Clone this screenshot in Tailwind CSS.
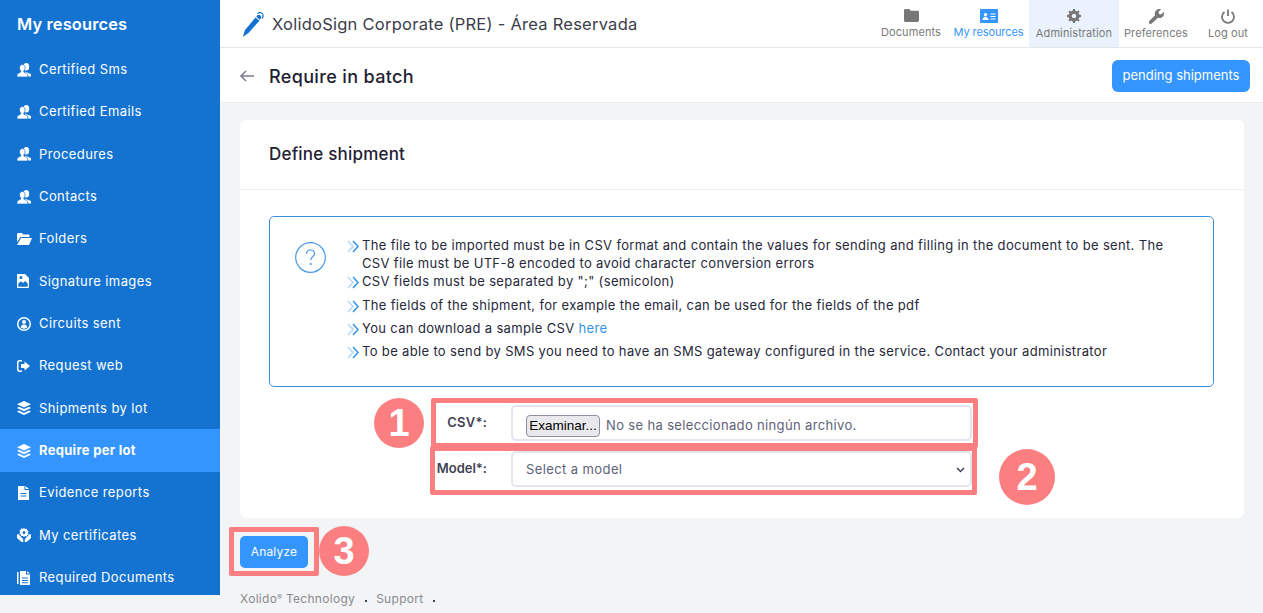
<!DOCTYPE html>
<html lang="en">

<head>
    <meta charset="UTF-8">
    <meta name="viewport" content="width=device-width, initial-scale=1.0">
    <title>Require in batch</title>
    <script src="https://cdn.jsdelivr.net/npm/@tailwindcss/browser@4"></script>
</head>

<body class="bg-[#f3f4f6] font-[Inter,sans-serif] text-[#2a2c3a]">
    <div class="relative flex h-[613px] w-[1263px] overflow-hidden">
        <!-- sidebar -->
        <aside class="h-[595px] w-[220px] shrink-0 overflow-hidden bg-[#1473d1] text-white">
            <div class="flex h-[48.4px] items-center pl-[17px] text-[16.5px] font-semibold tracking-[0.1px]">My resources</div>
            <nav class="text-[13px] tracking-[0.4px]">
                <a class="flex h-[42.35px] items-center pl-[17px]"><svg class="mr-[8px] h-[14px] w-[14px] fill-white" viewBox="0 0 14 14"><ellipse cx="9.300" cy="3.800" rx="2.900" ry="3.800"/><path d="M8 8.500l2 1 4 1.500v2.500H8z"/><path stroke="#1473d1" stroke-width=".7" d="M5.300 1.500c1.700 0 2.800 1.500 2.800 3.400 0 1.400-.6 2.500-1.300 3.100v1l3 1.500c.7.400 1 1 1 1.500v2H0v-2c0-.6.300-1.100 1-1.500l2.800-1.500V8C3.100 7.400 2.500 6.300 2.500 4.900c0-1.900 1.100-3.400 2.800-3.400z"/></svg>Certified Sms</a>
                <a class="flex h-[42.35px] items-center pl-[17px]"><svg class="mr-[8px] h-[14px] w-[14px] fill-white" viewBox="0 0 14 14"><ellipse cx="9.300" cy="3.800" rx="2.900" ry="3.800"/><path d="M8 8.500l2 1 4 1.500v2.500H8z"/><path stroke="#1473d1" stroke-width=".7" d="M5.300 1.500c1.700 0 2.800 1.500 2.800 3.400 0 1.400-.6 2.500-1.300 3.100v1l3 1.500c.7.400 1 1 1 1.500v2H0v-2c0-.6.300-1.100 1-1.500l2.800-1.500V8C3.100 7.400 2.500 6.300 2.500 4.900c0-1.900 1.100-3.400 2.800-3.400z"/></svg>Certified Emails</a>
                <a class="flex h-[42.35px] items-center pl-[17px]"><svg class="mr-[8px] h-[14px] w-[14px] fill-white" viewBox="0 0 14 14"><ellipse cx="9.300" cy="3.800" rx="2.900" ry="3.800"/><path d="M8 8.500l2 1 4 1.500v2.500H8z"/><path stroke="#1473d1" stroke-width=".7" d="M5.300 1.500c1.700 0 2.800 1.500 2.800 3.400 0 1.400-.6 2.500-1.300 3.100v1l3 1.500c.7.400 1 1 1 1.500v2H0v-2c0-.6.300-1.100 1-1.500l2.800-1.500V8C3.100 7.400 2.500 6.300 2.500 4.900c0-1.900 1.100-3.400 2.800-3.400z"/></svg>Procedures</a>
                <a class="flex h-[42.35px] items-center pl-[17px]"><svg class="mr-[8px] h-[14px] w-[14px] fill-white" viewBox="0 0 14 14"><ellipse cx="9.300" cy="3.800" rx="2.900" ry="3.800"/><path d="M8 8.500l2 1 4 1.500v2.500H8z"/><path stroke="#1473d1" stroke-width=".7" d="M5.300 1.500c1.700 0 2.800 1.500 2.800 3.400 0 1.400-.6 2.500-1.300 3.100v1l3 1.500c.7.400 1 1 1 1.500v2H0v-2c0-.6.300-1.100 1-1.500l2.800-1.500V8C3.100 7.400 2.500 6.300 2.500 4.900c0-1.900 1.100-3.400 2.800-3.400z"/></svg>Contacts</a>
                <a class="flex h-[42.35px] items-center pl-[17px]"><svg class="mr-[7px] h-[12px] w-[15px] fill-white" viewBox="0 0 15 12"><path d="M0 1.500C0 .7.500 0 1.300 0h3.500l1.500 1.500h5c.7 0 1.200.5 1.200 1.200V4H3.500L0 9z"/><path d="M4 5h11l-3 7H0z"/></svg>Folders</a>
                <a class="flex h-[42.35px] items-center pl-[17px]"><svg class="mr-[10px] h-[14px] w-[12px] fill-white" viewBox="0 0 12 14"><path fill-rule="evenodd" d="M1 0h7l4 4v9c0 .6-.4 1-1 1H1c-.6 0-1-.4-1-1V1c0-.6.400-1 1-1zm.3 9.500v3.200h9.400V9.500L8.200 7 6 9 4 7.200zM4 2a1.500 1.500 0 1 0 0 3 1.500 1.500 0 0 0 0-3z"/></svg>Signature images</a>
                <a class="flex h-[42.35px] items-center pl-[17px]"><svg class="mr-[8px] h-[14px] w-[14px] fill-white" viewBox="0 0 14 14"><path fill-rule="evenodd" d="M7 0a7 7 0 1 1 0 14A7 7 0 0 1 7 0zm0 1.500a5.500 5.500 0 1 0 0 11 5.500 5.500 0 0 0 0-11zM7 3a2 2 0 1 1 0 4 2 2 0 0 1 0-4zM3.800 10.500c0-2 1.300-3 3.200-3s3.200 1 3.200 3c-.8.700-1.900 1.200-3.200 1.200s-2.400-.5-3.200-1.200z"/></svg>Circuits sent</a>
                <a class="flex h-[42.35px] items-center pl-[17px]"><svg class="mr-[9px] h-[12px] w-[13px] fill-white" viewBox="0 0 13 12"><path d="M0 2.500C0 1.200 1 0 2.400 0H5v1.500H2.500c-.5 0-1 .5-1 1v7c0 .5.500 1 1 1H5V12H2.400C1 12 0 10.800 0 9.500z"/><path d="M7.500 1.500 13 6l-5.500 4.500V8H4V4h3.500z"/></svg>Request web</a>
                <a class="flex h-[42.35px] items-center pl-[17px]"><svg class="mr-[8px] h-[14px] w-[14px] fill-white" viewBox="0 0 14 14"><path d="M7 0l7 3.200-7 3.200L0 3.200z"/><path d="M2 5.800l5 2.300 5-2.300 2 1.200-7 3.200L0 7z"/><path d="M2 9.600l5 2.300 5-2.300 2 1.200L7 14 0 10.800z"/></svg>Shipments by lot</a>
                <a class="flex h-[42.35px] items-center bg-[#3495ff] pl-[17px] font-bold tracking-[0.3px]"><svg class="mr-[8px] h-[14px] w-[14px] fill-white" viewBox="0 0 14 14"><path d="M7 0l7 3.200-7 3.200L0 3.200z"/><path d="M2 5.800l5 2.300 5-2.300 2 1.200-7 3.200L0 7z"/><path d="M2 9.600l5 2.300 5-2.300 2 1.200L7 14 0 10.800z"/></svg>Require per lot</a>
                <a class="flex h-[42.35px] items-center pl-[17px]"><svg class="mr-[10px] ml-[1px] h-[14px] w-[11px] fill-white" viewBox="0 0 11 14"><path fill-rule="evenodd" d="M0 0h6.500v4H11v10H0zM7.500 0 11 3H7.500zM2.500 7v1h6V7zm0 2.500v1h6v-1z"/></svg>Evidence reports</a>
                <a class="flex h-[42.35px] items-center pl-[17px]"><svg class="mr-[8px] h-[14px] w-[14px] fill-white" viewBox="0 0 14 14"><path fill-rule="evenodd" d="M7 0l1.200 1 1.600-.2.400 1.500 1.300.9-.6 1.500.6 1.500-1.300.9-.4 1.500L8.200 8 7 9 5.800 8l-1.600.1-.4-1.500-1.300-.9.600-1.500-.6-1.500 1.300-.9.400-1.500L5.800 1zM7 3a1.500 1.500 0 1 0 0 3 1.500 1.500 0 0 0 0-3z"/><path d="M0 6.500l1.500-.5 4 4.500c.5.500.8 1 .8 1.700V14H4.500L0 10zM14 6.500l-1.500-.5-4 4.500c-.5.500-.8 1-.8 1.700V14h1.800L14 10z"/></svg>My certificates</a>
                <a class="flex h-[42.35px] items-center pl-[17px]"><svg class="mr-[9px] h-[14px] w-[13px] fill-white" viewBox="0 0 13 14"><path d="M0 1h1.500v12H0z"/><path fill-rule="evenodd" d="M3 0h6v3.500h4V14H3zM10 0l3 2.500h-3zM5 6.500v1h6v-1zm0 2.500v1h6V9zm0 2.200v1h6v-1z"/></svg>Required Documents</a>
            </nav>
        </aside>

        <div class="flex min-w-0 flex-1 flex-col">
            <!-- top bar -->
            <header class="flex h-[48px] shrink-0 items-stretch justify-between border-b border-[#e5e7eb] bg-white">
                <div class="flex items-center pl-[22px]">
                    <svg class="mr-[8px] h-[26px] w-[22px]" viewBox="0 0 22 26"><path fill="#1473d1" d="M13.500 6.500l4 3.200L6.500 22 1.500 25.500 1 25l2-6z"/><path fill="#1473d1" d="M15 4.500c1-1 2.500-1 3.500 0s1 2.500 0 3.500l-.7.800-3.500-3z"/><path fill="none" stroke="#1473d1" stroke-width="1.200" d="M15.500 2.500c2-1.500 4-1 5 .5s.8 3-.5 4.500"/></svg>
                    <span class="translate-y-[1px] text-[16.5px] tracking-[0.25px] text-[#3b3d4a]">XolidoSign Corporate (PRE) - Área Reservada</span>
                </div>
                <nav class="flex text-[11px] tracking-[0.1px] text-[#7b7b7b]">
                    <a class="flex w-[74px] flex-col items-center pt-[9px]"><svg class="h-[13px] w-[15px] fill-[#777]" viewBox="0 0 15 13"><path d="M0 1.500C0 .7.600 0 1.400 0h3.800l1.500 1.700h6.900c.8 0 1.400.6 1.400 1.400v8.500c0 .8-.6 1.400-1.400 1.400H1.400C.6 13 0 12.400 0 11.600z"/></svg><span class="mt-[2px]">Documents</span></a>
                    <a class="flex w-[81px] flex-col items-center pt-[9px] tracking-[-0.1px] text-[#3495ff]"><svg class="h-[14px] w-[18px] fill-[#3495ff]" viewBox="0 0 18 14"><path fill-rule="evenodd" d="M1 0h16c.6 0 1 .4 1 1v12c0 .6-.4 1-1 1H1c-.6 0-1-.4-1-1V1c0-.6.400-1 1-1zm4.500 4a1.700 1.700 0 1 0 0 3.400 1.700 1.700 0 0 0 0-3.400zM2.500 11h6c0-1.800-1.200-3-3-3s-3 1.200-3 3zm8-6.500v1h5v-1zm0 2.500v1h5V7zm0 2.500v1h5v-1z"/></svg><span class="mt-[1px]">My resources</span></a>
                    <a class="flex w-[90px] flex-col items-center bg-[#e9f2fd] pt-[9px]"><svg class="h-[14px] w-[14px] fill-[#777]" viewBox="0 0 14 14"><path fill-rule="evenodd" d="M6 0h2l.4 1.800 1.300.6L11.300 1.400l1.300 1.300-1 1.600.6 1.300L14 6v2l-1.800.4-.6 1.300 1 1.600-1.300 1.300-1.600-1-1.300.6L8 14H6l-.4-1.800-1.300-.6-1.600 1-1.300-1.300 1-1.600-.6-1.300L0 8V6l1.800-.4.600-1.300-1-1.600 1.300-1.300 1.600 1 1.300-.6zM7 4.800a2.200 2.200 0 1 0 0 4.400 2.200 2.200 0 0 0 0-4.400z"/></svg><span class="mt-[2px]">Administration</span></a>
                    <a class="flex w-[74px] flex-col items-center pt-[9px]"><svg class="h-[15px] w-[15px] fill-[#777]" viewBox="0 0 15 15"><path d="M10.500 0c.6 0 1.100.1 1.600.3L9.500 3l.5 2 2 .5 2.700-2.600c.2.500.3 1 .3 1.600a4.500 4.500 0 0 1-6 4.200L3 14.300c-.8.900-2 .9-2.700.2s-.7-1.900.2-2.700l5.600-5.600A4.500 4.500 0 0 1 10.500 0z"/></svg><span class="mt-[1px]">Preferences</span></a>
                    <a class="flex w-[70px] flex-col items-center pt-[9px]"><svg class="h-[15px] w-[14px] fill-none stroke-[#777] stroke-[1.800]" viewBox="0 0 14 15"><path d="M7 .5v6.500"/><path d="M3.500 3a6 6 0 1 0 7 0"/></svg><span class="mt-[1px]">Log out</span></a>
                </nav>
            </header>

            <!-- page title -->
            <div class="flex h-[55px] shrink-0 items-center justify-between border-b border-[#ebedf0] bg-white pt-[2px] pr-[13px] pl-[20px]">
                <div class="flex items-center">
                    <svg class="mr-[15px] h-[12px] w-[14px] fill-none stroke-[#7e8299] stroke-[1.600]" viewBox="0 0 14 12"><path d="M14 6H1"/><path d="M6 1 1 6l5 5"/></svg>
                    <h1 class="text-[18px] font-medium tracking-[0.35px] text-[#1f2133]">Require in batch</h1>
                </div>
                <button class="h-[32px] w-[138px] rounded-[6px] bg-[#3495ff] text-[13px] text-white">pending shipments</button>
            </div>

            <main class="px-[20px] pt-[17px]">
                <section class="h-[398px] w-[1004px] rounded-[6px] bg-white">
                    <div class="flex h-[70px] items-center border-b border-[#eff0f3] pl-[29px] text-[17px] font-medium tracking-[0.2px] text-[#1f2133]">Define shipment</div>
                    <div class="pt-[26px] pr-[30px] pl-[29px]">
                        <div class="flex h-[171px] rounded-[5px] border border-[#3d8fdc] pt-[19px]">
                            <svg class="mt-[6px] mr-[21px] ml-[25px] h-[31px] w-[31px] shrink-0 fill-none stroke-[#4a9be8] stroke-[1.200]" viewBox="0 0 31 31"><circle cx="15.500" cy="15.500" r="14.800"/><path d="M11.500 12c0-2.500 1.800-4 4-4s4 1.500 4 3.700c0 3-3.800 3-3.800 6.300"/><circle cx="15.700" cy="22" r=".5"/></svg>
                            <ul class="text-[13px] leading-[18px] tracking-[0.34px] text-[#26283a]">
                                <li class="flex h-[36px] w-[830px]"><svg class="mt-[4px] mr-[2px] h-[13px] w-[13px] shrink-0 fill-none stroke-[1.500]" viewBox="0 0 13 13"><path stroke="#b5d6f5" d="M1 1l5 5.500-5 5.500"/><path stroke="#3495e8" d="M6 1l5 5.500-5 5.500"/></svg><span>The file to be imported must be in CSV format and contain the values for sending and filling in the document to be sent. The CSV file must be UTF-8 encoded to avoid character conversion errors</span></li>
                                <li class="flex h-[24px] items-start"><svg class="mt-[4px] mr-[2px] h-[13px] w-[13px] shrink-0 fill-none stroke-[1.500]" viewBox="0 0 13 13"><path stroke="#b5d6f5" d="M1 1l5 5.500-5 5.500"/><path stroke="#3495e8" d="M6 1l5 5.500-5 5.500"/></svg><span>CSV fields must be separated by ";" (semicolon)</span></li>
                                <li class="flex h-[23px] items-start"><svg class="mt-[4px] mr-[2px] h-[13px] w-[13px] shrink-0 fill-none stroke-[1.500]" viewBox="0 0 13 13"><path stroke="#b5d6f5" d="M1 1l5 5.500-5 5.500"/><path stroke="#3495e8" d="M6 1l5 5.500-5 5.500"/></svg><span>The fields of the shipment, for example the email, can be used for the fields of the pdf</span></li>
                                <li class="flex h-[23px] items-start"><svg class="mt-[4px] mr-[2px] h-[13px] w-[13px] shrink-0 fill-none stroke-[1.500]" viewBox="0 0 13 13"><path stroke="#b5d6f5" d="M1 1l5 5.500-5 5.500"/><path stroke="#3495e8" d="M6 1l5 5.500-5 5.500"/></svg><span>You can download a sample CSV <a class="text-[#3495e8]">here</a></span></li>
                                <li class="flex h-[23px] items-start"><svg class="mt-[4px] mr-[2px] h-[13px] w-[13px] shrink-0 fill-none stroke-[1.500]" viewBox="0 0 13 13"><path stroke="#b5d6f5" d="M1 1l5 5.500-5 5.500"/><path stroke="#3495e8" d="M6 1l5 5.500-5 5.500"/></svg><span>To be able to send by SMS you need to have an SMS gateway configured in the service. Contact your administrator</span></li>
                            </ul>
                        </div>
                        <form class="mt-[18px] text-[13px]">
                            <div class="flex h-[36px] items-center">
                                <label class="mr-[25px] w-[218px] text-right font-semibold tracking-[0.2px] text-[#3f4254]">CSV*:</label>
                                <div class="-ml-[1px] flex h-[36px] w-[461px] items-center rounded-[5px] border-2 border-[#e4e6ef] pt-[5px] pl-[13px] text-[#5e6278]">
                                    <button type="button" class="mr-[6px] h-[22px] w-[74px] rounded-[4px] border border-[#8f8f9d] bg-[#e9e9ed] font-['Liberation_Sans',sans-serif] text-[13.500px] text-black">Examinar...</button>
                                    <span class="tracking-[0.35px]">No se ha seleccionado ningún archivo.</span>
                                </div>
                            </div>
                            <div class="mt-[10px] flex h-[36px] items-center">
                                <label class="mr-[25px] w-[218px] text-right font-semibold text-[#3f4254]">Model*:</label>
                                <div class="-ml-[1px] flex h-[36px] w-[461px] items-center justify-between rounded-[5px] border-2 border-[#e4e6ef] pt-[1px] pr-[5px] pl-[13px] text-[#5e6278]">
                                    <span class="tracking-[0.4px]">Select a model</span>
                                    <svg class="h-[6px] w-[9px] fill-none stroke-[#3f4254] stroke-[1.500]" viewBox="0 0 9 6"><path d="M1 1l3.500 3.500L8 1"/></svg>
                                </div>
                            </div>
                        </form>
                    </div>
                </section>
                <button class="mt-[18px] h-[32px] w-[68px] rounded-[5px] bg-[#3495ff] text-[12px] tracking-[0.2px] text-white">Analyze</button>
                <footer class="mt-[22px] flex items-center text-[12px] tracking-[0.3px] text-[#8a8a8f]">
                    <span>Xolido<sup class="text-[7px]">®</sup> Technology</span>
                    <span class="mr-[9px] ml-[10px] h-[2px] w-[2px] translate-y-[2px] bg-[#444]"></span>
                    <span>Support</span>
                    <span class="ml-[9px] h-[2px] w-[2px] translate-y-[2px] bg-[#444]"></span>
                </footer>
            </main>
        </div>

        <!-- callouts drawn over the screenshot -->
        <div class="absolute top-[398px] left-[431px] h-[50px] w-[547px] rounded-[2px] border-[5px] border-[#fb7f80]"></div>
        <div class="absolute top-[446px] left-[430px] h-[49px] w-[547px] rounded-[2px] border-[5px] border-[#fb7f80]"></div>
        <div class="absolute top-[527px] left-[229px] h-[49px] w-[90px] rounded-[2px] border-[5px] border-[#fb7f80]"></div>
        <div class="absolute top-[398px] left-[374px] flex h-[50px] w-[50px] items-center justify-center rounded-full bg-[#fb7f80] font-['Liberation_Sans',sans-serif] text-[38px] font-bold text-white">1</div>
        <div class="absolute top-[449px] left-[999px] flex h-[56px] w-[56px] items-center justify-center rounded-full bg-[#fb7f80] font-['Liberation_Sans',sans-serif] text-[38px] font-bold text-white">2</div>
        <div class="absolute top-[526px] left-[319px] flex h-[50px] w-[50px] items-center justify-center rounded-full bg-[#fb7f80] font-['Liberation_Sans',sans-serif] text-[38px] font-bold text-white">3</div>
    </div>
</body>

</html>
